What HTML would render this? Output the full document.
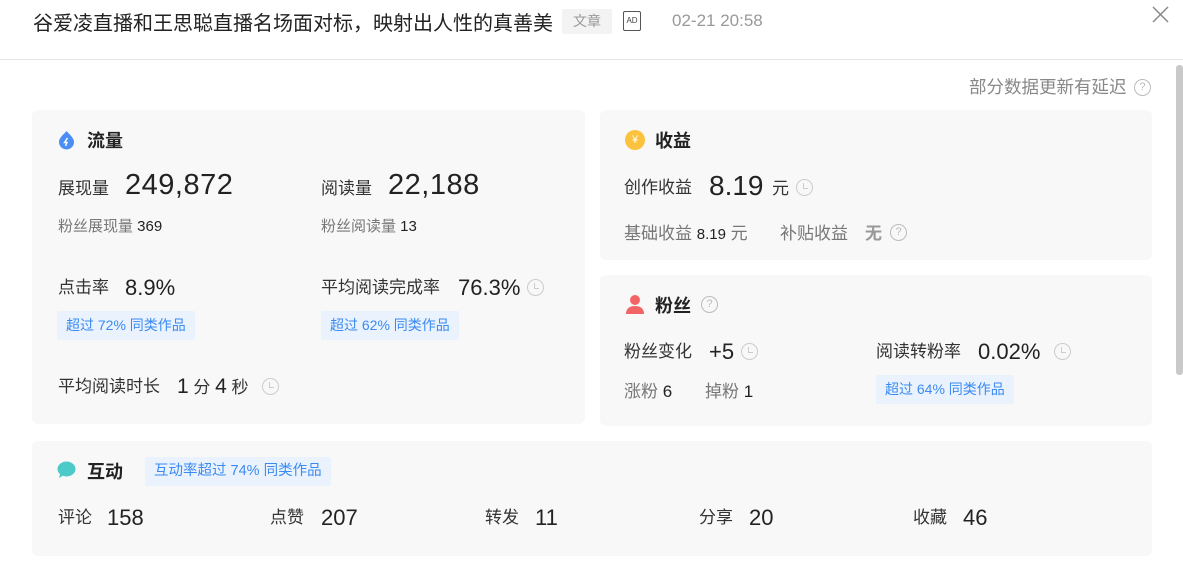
<!DOCTYPE html>
<html><head><meta charset="utf-8"><style>
*{margin:0;padding:0;box-sizing:border-box}
body{width:1183px;height:571px;background:#fff;position:relative;overflow:hidden;font-family:"Liberation Sans","Noto Sans CJK SC",sans-serif;color:#222}
.a{position:absolute;white-space:nowrap}
.card{position:absolute;background:#f8f8f9;border-radius:6px}
.t{font-size:18px;font-weight:bold;color:#222}
.l{font-size:17px;color:#333}
.n{font-size:22px;color:#222}
.big{font-size:29px;color:#222;letter-spacing:0.5px}
.s{font-size:15px;color:#777}
.s b{color:#222;font-weight:normal}
.bd{position:absolute;background:#eaf3fd;color:#3b8af2;font-size:14px;height:29px;line-height:29px;padding:0 9px;border-radius:2px}
.clk{position:absolute;width:17px;height:17px;border:1.5px solid #ccc;border-radius:50%}
.clk:after{content:"";position:absolute;left:6px;top:3px;width:4px;height:5px;border-left:1.5px solid #ccc;border-bottom:1.5px solid #ccc}
.q{position:absolute;width:17px;height:17px;border:1.3px solid #bbb;border-radius:50%;font-size:11px;color:#bbb;text-align:center;line-height:15px}
</style></head><body>
<div class="a" style="left:33px;top:7px;font-size:20px;color:#222">谷爱凌直播和王思聪直播名场面对标，映射出人性的真善美</div>
<div class="a" style="left:562px;top:9px;width:50px;height:25px;background:#f3f3f3;color:#999;font-size:14px;line-height:25px;text-align:center;border-radius:2px">文章</div>
<div class="a" style="left:623px;top:11px;width:18px;height:20px;border:1.5px solid #555;border-radius:2px;font-size:8px;line-height:17px;text-align:center;color:#444">AD</div>
<div class="a" style="left:672px;top:11px;font-size:17px;color:#999">02-21 20:58</div>
<svg class="a" style="left:1152px;top:6px" width="17" height="17"><path d="M1 1L16 16M16 1L1 16" stroke="#888" stroke-width="1.5"/></svg>
<div class="a" style="left:0;top:59px;width:1183px;height:1px;background:#e5e5e5"></div>
<div class="a" style="left:1176px;top:65px;width:7px;height:310px;background:#c9c9c9;border-radius:3px"></div>
<div class="a" style="left:969px;top:74px;font-size:17.5px;color:#888">部分数据更新有延迟</div>
<div class="q" style="left:1134px;top:79px">?</div>

<div class="card" style="left:32px;top:110px;width:553px;height:314px"></div>
<div class="card" style="left:600px;top:110px;width:552px;height:150px"></div>
<div class="card" style="left:600px;top:275px;width:552px;height:151px"></div>
<div class="card" style="left:32px;top:441px;width:1120px;height:115px"></div>

<svg class="a" style="left:58px;top:130px" width="17" height="20"><path d="M8.5 1C5 5 1 8 1 12a7.5 7.5 0 0015 0C16 8 12 5 8.5 1z" fill="#4a8ef5"/><path d="M9.5 8L6.5 12.5H9L7.5 16" stroke="#fff" stroke-width="1.4" fill="none"/></svg>
<div class="a t" style="left:87px;top:127px">流量</div>
<div class="a l" style="left:58px;top:174px">展现量</div>
<div class="a big" style="left:125px;top:169px">249,872</div>
<div class="a l" style="left:321px;top:174px">阅读量</div>
<div class="a big" style="left:388px;top:169px">22,188</div>
<div class="a s" style="left:58px;top:215px">粉丝展现量 <b>369</b></div>
<div class="a s" style="left:321px;top:215px">粉丝阅读量 <b>13</b></div>
<div class="a l" style="left:58px;top:273px">点击率</div>
<div class="a n" style="left:125px;top:275px">8.9%</div>
<div class="a l" style="left:321px;top:273px">平均阅读完成率</div>
<div class="a n" style="left:458px;top:275px">76.3%</div>
<div class="clk" style="left:527px;top:279px"></div>
<div class="bd" style="left:57px;top:311px">超过 72% 同类作品</div>
<div class="bd" style="left:321px;top:311px">超过 62% 同类作品</div>
<div class="a l" style="left:58px;top:372px">平均阅读时长</div>
<div class="a" style="left:177px;top:373px;font-size:17px;color:#333"><span style="font-size:21px;color:#222">1</span> 分 <span style="font-size:21px;color:#222">4</span> 秒</div>
<div class="clk" style="left:262px;top:378px"></div>

<div class="a" style="left:625px;top:130px;width:20px;height:20px;border-radius:50%;background:#fbc33d;color:#fff;font-size:11px;text-align:center;line-height:20px">¥</div>
<div class="a t" style="left:655px;top:127px">收益</div>
<div class="a l" style="left:624px;top:173px">创作收益</div>
<div class="a" style="left:709px;top:170px;font-size:28px;color:#222">8.19</div>
<div class="a l" style="left:772px;top:174px">元</div>
<div class="clk" style="left:796px;top:179px"></div>
<div class="a s" style="left:624px;top:219px;font-size:17px">基础收益 <b style="font-size:15px">8.19</b> 元</div>
<div class="a s" style="left:780px;top:219px;font-size:17px">补贴收益</div>
<div class="a" style="left:865px;top:219px;font-size:17px;font-weight:bold;color:#999">无</div>
<div class="q" style="left:890px;top:224px">?</div>

<svg class="a" style="left:625px;top:294px" width="20" height="21"><circle cx="10" cy="6" r="5" fill="#f26466"/><path d="M1 20c0-6 4-8 9-8s9 2 9 8z" fill="#f26466"/></svg>
<div class="a t" style="left:655px;top:292px">粉丝</div>
<div class="q" style="left:701px;top:296px">?</div>
<div class="a l" style="left:624px;top:337px">粉丝变化</div>
<div class="a n" style="left:709px;top:339px">+5</div>
<div class="clk" style="left:741px;top:343px"></div>
<div class="a l" style="left:876px;top:337px">阅读转粉率</div>
<div class="a n" style="left:978px;top:339px">0.02%</div>
<div class="clk" style="left:1054px;top:343px"></div>
<div class="a s" style="left:624px;top:377px;font-size:17px">涨粉 <b>6</b></div>
<div class="a s" style="left:705px;top:377px;font-size:17px">掉粉 <b>1</b></div>
<div class="bd" style="left:876px;top:375px">超过 64% 同类作品</div>

<svg class="a" style="left:57px;top:461px" width="19" height="18"><ellipse cx="9.5" cy="8" rx="9" ry="7.5" fill="#4ccac8"/><path d="M3 13L2 17L7 14z" fill="#4ccac8"/></svg>
<div class="a t" style="left:87px;top:458px">互动</div>
<div class="bd" style="left:145px;top:457px;font-size:14.5px">互动率超过 74% 同类作品</div>
<div class="a l" style="left:58px;top:503px">评论</div><div class="a n" style="left:107px;top:505px">158</div>
<div class="a l" style="left:270px;top:503px">点赞</div><div class="a n" style="left:321px;top:505px">207</div>
<div class="a l" style="left:485px;top:503px">转发</div><div class="a n" style="left:535px;top:505px">11</div>
<div class="a l" style="left:699px;top:503px">分享</div><div class="a n" style="left:749px;top:505px">20</div>
<div class="a l" style="left:913px;top:503px">收藏</div><div class="a n" style="left:963px;top:505px">46</div>
</body></html>
